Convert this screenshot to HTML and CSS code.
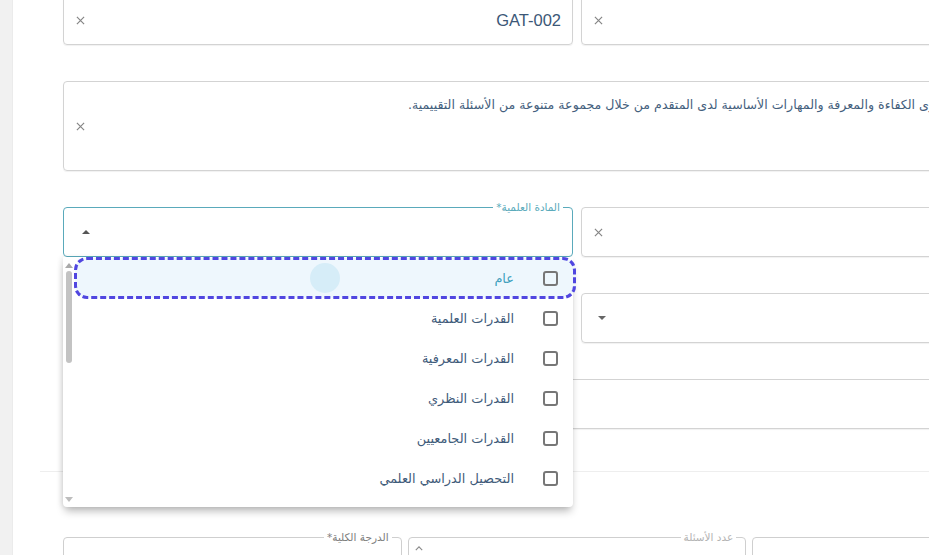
FILE: index.html
```html
<!DOCTYPE html>
<html lang="ar">
<head>
<meta charset="utf-8">
<title>نموذج الاختبار</title>
<link rel="stylesheet" href="styles.css">
</head>
<body>
<div class="app">
  <aside class="rail"></aside>
  <main class="main">
    <form class="form">
      <div class="grid2">
        <div class="field">
          <svg class="clear" viewBox="0 0 10 10"><path d="M1 1L9 9M9 1L1 9"/></svg>
          <span class="value">GAT-002</span>
        </div>
        <div class="field">
          <svg class="clear" viewBox="0 0 10 10"><path d="M1 1L9 9M9 1L1 9"/></svg>
        </div>
        <div class="field area span2">
          <svg class="clear" viewBox="0 0 10 10"><path d="M1 1L9 9M9 1L1 9"/></svg>
          <p class="area-text" dir="rtl">يهدف هذا الاختبار إلى قياس مستوى الكفاءة والمعرفة والمهارات الأساسية لدى المتقدم من خلال مجموعة متنوعة من الأسئلة التقييمية.</p>
        </div>
        <div class="field focused">
          <span class="label label-teal" dir="rtl">المادة العلمية*</span>
          <span class="tri tri-up"></span>
          <div class="dropdown">
            <div class="scroll">
              <span class="sc-up"></span>
              <span class="sc-thumb"></span>
              <span class="sc-down"></span>
            </div>
            <ul class="list">
              <li class="item active"><span class="ripple"></span><span class="item-text" dir="rtl">عام</span><span class="box"></span></li>
              <li class="item"><span class="item-text" dir="rtl">القدرات العلمية</span><span class="box"></span></li>
              <li class="item"><span class="item-text" dir="rtl">القدرات المعرفية</span><span class="box"></span></li>
              <li class="item"><span class="item-text" dir="rtl">القدرات النظري</span><span class="box"></span></li>
              <li class="item"><span class="item-text" dir="rtl">القدرات الجامعيين</span><span class="box"></span></li>
              <li class="item"><span class="item-text" dir="rtl">التحصيل الدراسي العلمي</span><span class="box"></span></li>
            </ul>
          </div>
        </div>
        <div class="field">
          <svg class="clear" viewBox="0 0 10 10"><path d="M1 1L9 9M9 1L1 9"/></svg>
        </div>
        <div class="field">
          <span class="tri tri-down"></span>
        </div>
        <div class="field">
          <span class="tri tri-down"></span>
        </div>
        <div class="field span2"></div>
      </div>
      <hr class="sep">
      <div class="grid3">
        <div class="field tall">
          <span class="label label-grey" dir="rtl">الدرجة الكلية*</span>
        </div>
        <div class="field tall">
          <span class="label label-light" dir="rtl">عدد الأسئلة</span>
          <svg class="chev" viewBox="0 0 10 6"><path d="M1 5L5 1L9 5"/></svg>
        </div>
        <div class="field tall"></div>
      </div>
    </form>
  </main>
</div>
</body>
</html>
```

FILE: styles.css
```css
html, body {
  margin: 0;
  height: 100%;
  overflow: hidden;
  background: #fff;
  font-family: "Liberation Sans", "DejaVu Sans", sans-serif;
}

.app {
  display: flex;
  min-height: 100vh;
}

.rail {
  flex: none;
  width: 12px;
  background: #f1f1f1;
  border-right: 1px solid #ebebeb;
}

.main {
  flex: none;
  padding-left: 50px;
}

.form {
  width: 1028px;
  margin-top: -5px;
}

.grid2 {
  display: grid;
  grid-template-columns: 510px 510px;
  grid-template-rows: 50px 90px 50px 50px 50px;
  column-gap: 8px;
  row-gap: 36px;
}

.span2 {
  grid-column: span 2;
}

.field {
  position: relative;
  box-sizing: border-box;
  border: 1px solid #d3d3d3;
  border-radius: 4px;
  display: flex;
  align-items: center;
  justify-content: space-between;
  padding: 0 11px 0 12px;
  box-shadow: 0 1px 1px rgba(0, 0, 0, 0.06);
}

.field.focused {
  border-color: #5aaabb;
  box-shadow: none;
}

.clear {
  width: 9px;
  height: 9px;
  flex: none;
  fill: none;
  stroke: #858585;
  stroke-width: 1.3;
}

.value {
  font-size: 16.5px;
  color: #3c5877;
}

.label {
  position: absolute;
  top: -8px;
  right: 9px;
  padding: 0 3px;
  background: #fff;
  font-family: "DejaVu Sans", sans-serif;
  font-size: 10.5px;
  line-height: 14px;
}

.label-teal { color: #5aaabb; }
.label-grey { color: #7d7d7d; }
.label-light { color: #b3b3b3; }

.area {
  justify-content: flex-start;
}

.area-text {
  flex: none;
  align-self: flex-start;
  margin: 15px 0 0 323px;
  white-space: nowrap;
  font-family: "DejaVu Sans", sans-serif;
  font-size: 12.6px;
  color: #44607d;
}

.tri {
  width: 0;
  height: 0;
  border-left: 4px solid transparent;
  border-right: 4px solid transparent;
  margin-left: 6px;
}

.tri-up {
  border-bottom: 4px solid #555;
}

.tri-down {
  border-top: 4px solid #666;
  margin-left: 4px;
}

/* dropdown overlay */
.dropdown {
  position: absolute;
  top: 100%;
  left: -1px;
  width: 510px;
  height: 250px;
  margin-top: 1px;
  background: #fff;
  border-radius: 0 0 4px 4px;
  box-shadow: 0 6px 9px -2px rgba(0, 0, 0, 0.28), -2px 0 5px rgba(0, 0, 0, 0.08);
  display: flex;
  z-index: 5;
}

.scroll {
  position: relative;
  flex: none;
  width: 12px;
}

.sc-up, .sc-down {
  position: absolute;
  left: 2px;
  width: 0;
  height: 0;
  border-left: 4px solid transparent;
  border-right: 4px solid transparent;
}

.sc-up {
  top: 6px;
  border-bottom: 5px solid #a9a9a9;
}

.sc-down {
  bottom: 5px;
  border-top: 5px solid #bdbdbd;
}

.sc-thumb {
  position: absolute;
  top: 14px;
  left: 3px;
  width: 6px;
  height: 92px;
  border-radius: 3px;
  background: #c3c3c3;
}

.list {
  list-style: none;
  margin: 0 -2px 0 0;
  padding: 0;
  flex: 1;
}

.item {
  position: relative;
  height: 40px;
  display: flex;
  align-items: center;
  justify-content: flex-end;
  padding-right: 17px;
  box-sizing: border-box;
  border-radius: 12px;
}

.item.active {
  background: #eef7fd;
  outline: 3px dashed #5046e0;
  outline-offset: -2px;
  margin-top: 1px;
}

.ripple {
  position: absolute;
  left: 235px;
  top: 5px;
  width: 30px;
  height: 30px;
  border-radius: 50%;
  background: #d6edf8;
}

.item-text {
  font-family: "DejaVu Sans", sans-serif;
  font-size: 12.9px;
  color: #3f5b7a;
  margin-right: 29px;
}

.item.active .item-text {
  color: #3fa0bd;
}

.box {
  width: 15px;
  height: 15px;
  box-sizing: border-box;
  border: 2px solid #777;
  border-radius: 3px;
  flex: none;
}

.sep {
  margin: 42px 0 0 -23px;
  width: 1100px;
  border: 0;
  border-top: 1px solid #eeeeee;
  height: 0;
}

.grid3 {
  display: grid;
  grid-template-columns: repeat(3, 1fr);
  column-gap: 6px;
  margin-top: 65px;
}

.field.tall {
  height: 50px;
  box-shadow: none;
  border-color: #cfcfcf;
}

.chev {
  position: absolute;
  top: 8px;
  left: 6px;
  width: 8px;
  height: 5px;
  fill: none;
  stroke: #8a8a8a;
  stroke-width: 1.4;
}
```
